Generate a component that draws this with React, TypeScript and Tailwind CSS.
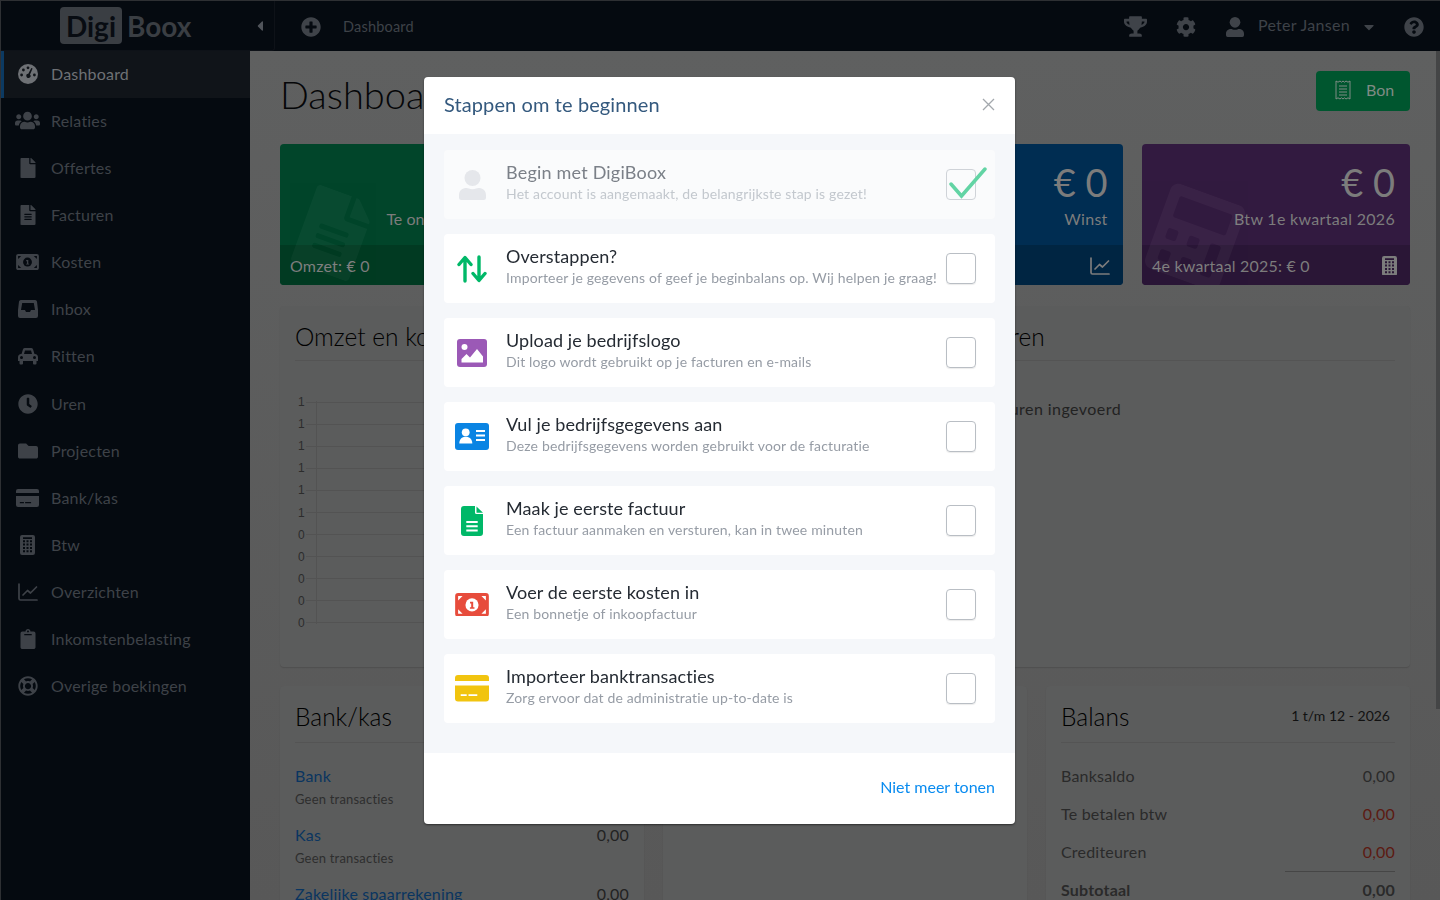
import React from "react";
import {
  FaUsers, FaFile, FaClock, FaFolder, FaClipboard, FaRegLifeRing, FaTrophy, FaCog,
  FaCaretDown, FaCaretLeft, FaQuestionCircle, FaPlusCircle, FaFileAlt, FaCalculator,
} from "react-icons/fa";

const DARK = "#050a10";

function Gauge({ bg = DARK }: { bg?: string }) {
  return (
    <svg width="20" height="20" viewBox="0 0 20 20" fill="currentColor">
      <circle cx="10" cy="10" r="10" />
      <g fill={bg}>
        <circle cx="3.6" cy="11" r="1.4" /><circle cx="5.4" cy="6" r="1.4" />
        <circle cx="10" cy="3.8" r="1.4" /><circle cx="16.4" cy="11" r="1.4" />
        <path d="M14.6 4.6 12 10.4a2.1 2.1 0 1 1-1.7-.7l3-5.7z" />
      </g>
    </svg>
  );
}

function Money({ w, hole = DARK }: { w: number; hole?: string }) {
  return (
    <svg width={w} height={w * 0.7} viewBox="0 0 34 24">
      <rect width="34" height="24" rx="3" fill="currentColor" />
      <g fill={hole}>
        <circle cx="17" cy="12" r="6.6" />
        <path d="M3 3h4.5L3 7.5zM31 3h-4.5L31 7.5zM3 21h4.5L3 16.5zM31 21h-4.5L31 16.5z" />
      </g>
      <path d="M15 8.8h3.2v5.6h1.3v1.4h-4.6v-1.4h1.3v-3.7H15z" fill="currentColor" />
    </svg>
  );
}

function Card({ w, hole }: { w: number; hole?: string }) {
  return (
    <svg width={w} height={w * 0.78} viewBox="0 0 34 26.5" fill="currentColor">
      <path d="M3 0h28a3 3 0 0 1 3 3v3H0V3a3 3 0 0 1 3-3z" />
      <path d="M0 10.5h34V23.500a3 3 0 0 1-3 3H3a3 3 0 0 1-3-3z" />
      <path d="M5.700 19.300h6v1.600h-6zM13.500 19.300h8.800v1.600h-8.800z" fill={hole ?? "#ffffff"} />
    </svg>
  );
}

function Inbox() {
  return (
    <svg width="20" height="18" viewBox="0 0 20 18" fill="currentColor" fillRule="evenodd">
      <path d="M3 0H17a2 2 0 0 1 2 1.500L20 10v6a2 2 0 0 1-2 2H2a2 2 0 0 1-2-2V10L1 1.500A2 2 0 0 1 3 0zM4.200 3 3 10H7l1 2h4l1-2h4L15.800 3z" />
    </svg>
  );
}

function Car() {
  return (
    <svg width="20" height="18" viewBox="0 0 20 18" fill="currentColor" fillRule="evenodd">
      <path d="M3.500 7 5 2.300A2 2 0 0 1 7 1H13a2 2 0 0 1 2 1.300L16.500 7A3 3 0 0 1 20 10V14H18.500V16.500a1 1 0 0 1-1 1H16a1 1 0 0 1-1-1V14H5v2.500a1 1 0 0 1-1 1H2.500a1 1 0 0 1-1-1V14H0V10A3 3 0 0 1 3.500 7zM6 7H14L13 3.400H7zM2 10.500a1.500 1.500 0 1 0 3 0 1.500 1.500 0 1 0-3 0zM15 10.500a1.500 1.500 0 1 0 3 0 1.500 1.500 0 1 0-3 0z" />
    </svg>
  );
}

function Calc({ w = 15 }: { w?: number }) {
  const btns = [5.200, 8.600, 12, 15.200]
    .flatMap((y) => [3, 6.500, 10].map((x) => `M${x} ${y}h2v2h-2z`))
    .join("");
  return (
    <svg width={w} height={w * 1.33} viewBox="0 0 15 20" fill="currentColor" fillRule="evenodd">
      <path d={`M2 0h11a2 2 0 0 1 2 2v16a2 2 0 0 1-2 2H2a2 2 0 0 1-2-2V2a2 2 0 0 1 2-2zM3 2.200v1.800h9V2.200z${btns}`} />
    </svg>
  );
}

function ChartIcon() {
  return (
    <svg width="20" height="18" viewBox="0 0 20 18" fill="none" stroke="currentColor" strokeWidth="1.700" strokeLinecap="round" strokeLinejoin="round">
      <path d="M1 1V15.500a1.500 1.500 0 0 0 1.500 1.500H19" />
      <path d="M5 12l4.500-4.500 3 2.500 6-6" />
    </svg>
  );
}

function Person({ w, color }: { w: number; color: string }) {
  return (
    <svg width={w} height={(w * 30) / 27} viewBox="0 0 27 30" fill={color}>
      <circle cx="13.500" cy="8" r="8" />
      <path d="M0 27.500V25C0 20.500 3.500 18 7.500 18c1.500 0 3 1.200 6 1.200s4.500-1.200 6-1.200c4 0 7.500 2.500 7.500 7v2.500a2.500 2.500 0 0 1-2.500 2.500h-22A2.500 2.500 0 0 1 0 27.500z" />
    </svg>
  );
}

function Arrows() {
  return (
    <svg width="30" height="28" viewBox="0 0 30 28" fill="none" stroke="#00b868" strokeWidth="3.400" strokeLinecap="round" strokeLinejoin="round">
      <path d="M8 26V3M2 9.500 8 2.500l6 7" />
      <path d="M22 2v23M16 18.500l6 7 6-7" />
    </svg>
  );
}

function ImageIcon() {
  return (
    <svg width="30" height="28" viewBox="0 0 30 28">
      <rect width="30" height="28" rx="3" fill="#9b59b6" />
      <circle cx="7.500" cy="8" r="3" fill="#fff" />
      <path d="M4.500 23.500V20l5-5 3.500 3.500 7-8.500 6 7.500v6z" fill="#fff" />
    </svg>
  );
}

function IdIcon() {
  return (
    <svg width="34" height="27" viewBox="0 0 34 27">
      <rect width="34" height="27" rx="3" fill="#0a84e3" />
      <circle cx="10.700" cy="9.300" r="3.900" fill="#fff" />
      <path d="M4.300 20.500c0-4 2.500-6.700 6.400-6.700s6.600 2.700 6.600 6.700z" fill="#fff" />
      <path d="M21 7h9v2h-9zM21 11.500h9v2h-9zM21 16h9v2h-9z" fill="#fff" />
    </svg>
  );
}

function FileIcon() {
  return (
    <svg width="22" height="30" viewBox="0 0 22 30" fill="#00b868">
      <path d="M3 0H14V6.500Q14 8 15.500 8H22V27a3 3 0 0 1-3 3H3a3 3 0 0 1-3-3V3a3 3 0 0 1 3-3z" />
      <path d="M15.500 0.500 22 6.800H15.500z" />
      <path d="M5.300 15h11.400v2H5.300zM5.300 19.300h11.400v2H5.300zM5.300 23.600h11.400v2H5.300z" fill="#fff" />
    </svg>
  );
}

function Receipt() {
  return (
    <svg width="16" height="20" viewBox="0 0 16 20" fill="none" stroke="#7f8b85" strokeWidth="1">
      <path d="M1 1l2 1.200L5 1l1.500 1.200L8 1l1.500 1.200L11 1l2 1.200L15 1v18l-2-1.200-2 1.200-1.500-1.200L8 19l-1.500-1.200L5 19l-2-1.200L1 19z" />
      <path d="M4 6h8M4 9h8M4 12h8M4 15h8" />
    </svg>
  );
}

const nav: [React.ReactNode, string][] = [
  [<Gauge bg="#101419" />, "Dashboard"],
  [<FaUsers size={25} />, "Relaties"],
  [<FaFile size={20} />, "Offertes"],
  [<FaFileAlt size={20} />, "Facturen"],
  [<Money w={23} />, "Kosten"],
  [<Inbox />, "Inbox"],
  [<Car />, "Ritten"],
  [<FaClock size={20} />, "Uren"],
  [<FaFolder size={20} />, "Projecten"],
  [<Card w={23} hole={DARK} />, "Bank/kas"],
  [<Calc w={15} />, "Btw"],
  [<ChartIcon />, "Overzichten"],
  [<FaClipboard size={20} />, "Inkomstenbelasting"],
  [<FaRegLifeRing size={20} />, "Overige boekingen"],
];

const steps: [React.ReactNode, string, string][] = [
  [<Arrows />, "Overstappen?", "Importeer je gegevens of geef je beginbalans op. Wij helpen je graag!"],
  [<ImageIcon />, "Upload je bedrijfslogo", "Dit logo wordt gebruikt op je facturen en e-mails"],
  [<IdIcon />, "Vul je bedrijfsgegevens aan", "Deze bedrijfsgegevens worden gebruikt voor de facturatie"],
  [<FileIcon />, "Maak je eerste factuur", "Een factuur aanmaken en versturen, kan in twee minuten"],
  [<span className="text-[#e74c3c]"><Money w={34} hole="#ffffff" /></span>, "Voer de eerste kosten in", "Een bonnetje of inkoopfactuur"],
  [<span className="text-[#f1c40f]"><Card w={34} /></span>, "Importeer banktransacties", "Zorg ervoor dat de administratie up-to-date is"],
];

function StatCard({ bg, band, amount, label, foot, icon, mark, labelCls }: { bg: string; band: string; amount?: string; label: string; foot?: string; icon?: React.ReactNode; mark?: React.ReactNode; labelCls?: string }) {
  return (
    <div className={`relative h-[141px] rounded-[4px] overflow-hidden flex flex-col text-[#7c7c7c] ${bg}`}>
      {mark}
      <div className="h-[101px] pr-[15px] flex flex-col items-end">
        <div className="h-[57px] mt-[11px] text-[38px] leading-[54px]">{amount}</div>
        <div className={`text-[16px] leading-[24px] mt-[-5px] ${labelCls ?? "tracking-[0.3px]"}`}>{label}</div>
      </div>
      <div className={`h-[40px] pl-[10px] pr-[13px] pt-[1px] flex items-center justify-between text-[16px] tracking-[0.2px] ${band}`}>
        <span>{foot}</span>
        {icon}
      </div>
    </div>
  );
}

const Panel = ({ title, children, right, h, titleCls }: { title: string; children?: React.ReactNode; right?: React.ReactNode; h: string; titleCls?: string }) => (
  <div className="rounded-[4px] bg-[#5b5c5c] px-[15px] shadow-[0_1px_1px_rgba(0,0,0,0.12)] overflow-hidden">
    <div className={`flex items-start justify-between border-b border-[#545454] ${h}`}>
      <div className={`text-[24.5px] leading-[61px] font-light text-[#000000] ${titleCls ?? ""}`}>{title}</div>
      {right}
    </div>
    {children}
  </div>
);

export default function App() {
  return (
    <div className="relative h-screen w-full overflow-hidden flex flex-col bg-[#5c5d5d] [font-family:Lato,sans-serif]">
      {/* top bar */}
      <header className="h-[51px] shrink-0 flex items-center pt-[1px] bg-[#050a10] border-t border-l border-[#2e3033] text-[#3e4248]">
        <div className="w-[274px] h-[50px] mt-[-1px] flex items-center pl-[59px] pr-[10px] border-r border-b border-[#0e1218] rounded-br-[3px]">
          <span className="h-[37px] w-[62px] rounded-[4px] bg-[#3a3e43] text-[#080c12] text-[28px] font-bold flex items-center justify-center">Digi</span>
          <span className="ml-[5px] text-[28px] font-bold text-[#3a3e43]">Boox</span>
          <FaCaretLeft size={16} className="ml-auto mr-[-4px]" color="#50545a" />
        </div>
        <div className="ml-[26px] w-[20px] h-[20px]">
          <FaPlusCircle size={20} color="#3f4349" />
        </div>
        <span className="ml-[22px] text-[14.5px] tracking-[0.2px]">Dashboard</span>
        <div className="ml-auto flex items-center">
          <FaTrophy size={23} color="#3f4349" />
          <FaCog size={20} color="#3f4349" className="ml-[29px]" />
          <span className="ml-[30px]"><Person w={18} color="#3f4349" /></span>
          <span className="ml-[14px] text-[16px] tracking-[0.3px] mt-[-4px]">Peter Jansen</span>
          <FaCaretDown size={16} color="#3f4349" className="ml-[11px]" />
          <FaQuestionCircle size={20} color="#3f4349" className="ml-[27px] mr-[16px]" />
        </div>
      </header>

      <div className="flex-1 flex min-h-0">
        {/* sidebar */}
        <aside className="w-[250px] shrink-0 bg-[#050a10] border-l border-[#2e3033]">
          {nav.map(([icon, label], i) => (
            <div
              key={label}
              className={
                i === 0
                  ? "h-[47.15px] pb-[2px] flex items-center bg-[#101419] border-l-[3px] border-[#0c3a62] text-[#6e7175] text-[16px]"
                  : "h-[47.15px] pb-[2px] flex items-center text-[#3e4248] text-[16px] pl-[3px]"
              }
            >
              <span className="w-[47px] flex justify-center">{icon}</span>
              <span className="tracking-[0.2px]">{label}</span>
            </div>
          ))}
        </aside>

        {/* main */}
        <main className="flex-1 min-w-0 pl-[30px] pr-[30px] bg-gradient-to-b from-[#5f6060] to-[#585858] text-[#202224]">
          <div className="flex items-start justify-between pt-[20px] h-[93px]">
            <h1 className="text-[38px] leading-[46px] font-light text-[#050608]">Dashboard</h1>
            <button className="h-[40px] w-[94px] rounded-[4px] bg-[#00562f] flex items-center pl-[19px] pb-[2px] gap-[15px] text-[16px] text-[#7f8b85]">
              <Receipt />
              Bon
            </button>
          </div>

          <div className="grid grid-cols-[repeat(4,268px)] gap-[19.33px]">
            <StatCard
              bg="bg-[#01452a]" band="bg-[#013a22]" label="Te ontvangen bedrag" labelCls="tracking-[0px]" foot="Omzet: € 0" amount="€ 0"
              mark={<FaFileAlt size={82} color="#ffffff" className="absolute left-[12px] top-[48px] rotate-[20deg] opacity-[0.03]" />}
            />
            <StatCard bg="bg-[#6b1f18]" band="bg-[#5a1a14]" label="Kosten" amount="€ 0" />
            <StatCard
              bg="bg-[#002d52]" band="bg-[#002542]" label="Winst" amount="€ 0" foot=""
              icon={<span className="text-[#7c7c7c]"><ChartIcon /></span>}
            />
            <StatCard
              bg="bg-[#321a40]" band="bg-[#2a1636]" label="Btw 1e kwartaal 2026" amount="€ 0" foot="4e kwartaal 2025: € 0"
              icon={<Calc w={15} />}
              mark={<FaCalculator size={90} color="#ffffff" className="absolute left-[8px] top-[48px] rotate-[20deg] opacity-[0.035]" />}
            />
          </div>

          <div className="grid grid-cols-[572px_1fr] gap-[20px] mt-[21px] h-[361px]">
            <Panel title="Omzet en kosten" h="h-[55px]">
              <div className="relative mt-[30px] pl-[3px]">
                <div className="absolute left-[21px] top-[10px] bottom-[10px] w-px bg-[#535353]" />
                {["1", "1", "1", "1", "1", "1", "0", "0", "0", "0", "0"].map((v, i) => (
                  <div key={i} className="h-[22.1px] flex items-center text-[12px] text-[#2c2c2c] [font-family:'Liberation_Sans',sans-serif]">
                    <span className="w-[8px]">{v}</span>
                    <span className="flex-1 h-px bg-[#535353]" />
                  </div>
                ))}
              </div>
            </Panel>
            <Panel title="Gewerkte uren" h="h-[55px]">
              <div className="mt-[36px] text-[16px] leading-[24px] tracking-[0.45px] text-[#222]">Er zijn nog geen uren ingevoerd</div>
            </Panel>
          </div>

          <div className="grid grid-cols-[repeat(3,364px)] gap-[19px] mt-[19px]">
            <Panel title="Bank/kas" h="h-[57px]">
              <div className="pt-[21px] text-[16px] tracking-[0.2px]">
                {["Bank", "Kas", "Zakelijke spaarrekening"].map((n) => (
                  <div key={n} className="h-[59px]">
                    <div className="flex justify-between leading-[24px]">
                      <span className="text-[#0a3560]">{n}</span>
                      <span className="text-[#222]">0,00</span>
                    </div>
                    <div className="text-[13px] leading-[22px] text-[#2e2e2e]">Geen transacties</div>
                  </div>
                ))}
              </div>
            </Panel>
            <Panel title="Resultaat" h="h-[57px]" />
            <Panel title="Balans" h="h-[57px]" right={<span className="mt-[19px] mr-[5px] text-[14px] text-[#111]">1 t/m 12 - 2026</span>}>
              <div className="pt-[21px] text-[16px] tracking-[0.2px] text-[#2a2a2a]">
                <div className="h-[38px] flex justify-between leading-[24px]"><span>Banksaldo</span><span>0,00</span></div>
                <div className="h-[38px] flex justify-between leading-[24px]"><span>Te betalen btw</span><span className="text-[#5c1a12]">0,00</span></div>
                <div className="h-[31px] flex justify-between leading-[24px]"><span>Crediteuren</span><span className="text-[#5c1a12]">0,00</span></div>
                <div className="h-px w-[110px] ml-auto bg-[#464646]" />
                <div className="mt-[6px] flex justify-between leading-[24px] font-bold">
                  <span>Subtotaal</span>
                  <span>0,00</span>
                </div>
              </div>
            </Panel>
          </div>
        </main>
      </div>

      {/* scrollbar thumb */}
      <div className="absolute right-0 top-[51px] w-[4px] h-[658px] bg-[#444546]" />

      {/* modal */}
      <div className="fixed inset-0 flex justify-center items-start pt-[77px]">
        <div className="w-[591px] mr-[1px] rounded-[4px] overflow-hidden bg-white shadow-[0_1px_2px_rgba(0,0,0,0.5)]">
          <div className="h-[57px] flex items-center justify-between pl-[20px] pr-[20px]">
            <span className="text-[20px] tracking-[0.1px] text-[#34597e] mt-[-4px]">Stappen om te beginnen</span>
            <svg className="mt-[-2px]" width="13" height="13" viewBox="0 0 13 13" stroke="#a3a8ad" strokeWidth="1.300" fill="none"><path d="M1 1l11 11M12 1 1 12" /></svg>
          </div>
          <div className="bg-[#f5f7fa] px-[20px] pt-[16px] pb-[30px] flex flex-col gap-[15px]">
            <div className="relative h-[69px] rounded-[4px] bg-[#fafbfc] flex items-center">
              <div className="w-[56px] mr-[6px] flex justify-center"><Person w={27} color="#e5e7eb" /></div>
              <div className="flex-1 min-w-0 pb-[6px]">
                <div className="text-[18px] leading-[24px] tracking-[0.2px] text-[#7b8088]">Begin met DigiBoox</div>
                <div className="text-[14px] leading-[20px] tracking-[0.155px] text-[#c3c8ce] whitespace-nowrap">Het account is aangemaakt, de belangrijkste stap is gezet!</div>
              </div>
              <span className="shrink-0 w-[30px] h-[31px] mr-[19px] rounded-[4px] border border-[#cfd3d8]" />
              <svg className="absolute left-[505px] top-[16px]" width="38" height="33" viewBox="0 0 38 33" fill="none" stroke="#62d4a4" strokeWidth="3.500" strokeLinecap="round"><path d="M2 18l10.500 12L36 3" /></svg>
            </div>
            {steps.map(([icon, title, sub]) => (
              <div key={title} className="h-[69px] rounded-[4px] bg-white flex items-center">
                <div className="w-[56px] mr-[6px] flex justify-center">{icon}</div>
                <div className="flex-1 min-w-0 pb-[6px]">
                  <div className="text-[18px] leading-[24px] tracking-[0.1px] text-[#252b33]">{title}</div>
                  <div className="text-[14px] leading-[20px] tracking-[0.155px] text-[#969ca5] whitespace-nowrap">{sub}</div>
                </div>
                <span className="shrink-0 w-[30px] h-[31px] mr-[19px] rounded-[4px] border border-[#b9bec4] shadow-[0_1px_1px_rgba(0,0,0,0.08)]" />
              </div>
            ))}
          </div>
          <div className="h-[71px] flex items-center justify-end pr-[20px] pb-[3px]">
            <span className="text-[16px] text-[#0a8cf0]">Niet meer tonen</span>
          </div>
        </div>
      </div>
    </div>
  );
}
